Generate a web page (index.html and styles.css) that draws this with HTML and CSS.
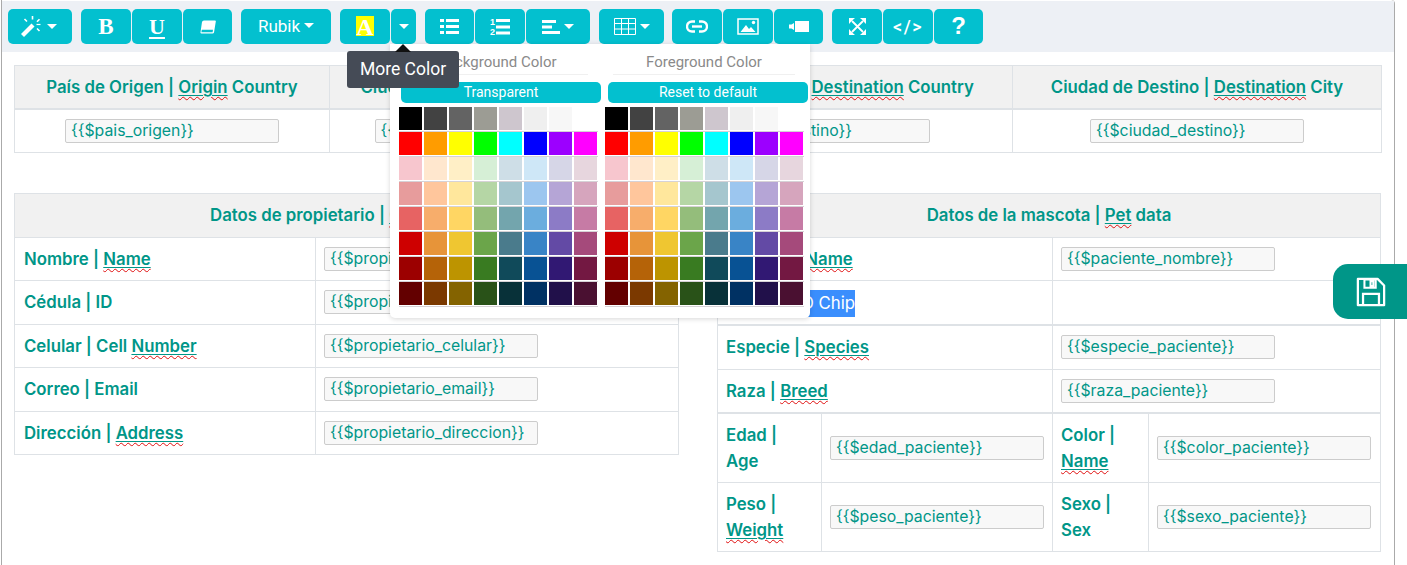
FILE: index.html
```html
<!DOCTYPE html>
<html lang="es">
<head>
<meta charset="utf-8">
<title>Plantilla</title>
<link rel="stylesheet" href="styles.css">
</head>
<body>
<div class="frame">
  <div class="toolbar">
    <div class="group">
      <button class="btn w64 wand"><svg width="24" height="21" viewBox="0 0 24 21"><path d="M0 18 10.500 7.500 13.500 10.500 3 21z" fill="#fff"/><path d="M11.500 0v3.500M3.500 3 6 5.500M18.500 3.200 16 5.700M16 12.500l2.500 2.500" stroke="#fff" stroke-width="1.600" fill="none"/><path d="M15.500 8.500h4" stroke="#fff" stroke-width="1.200"/></svg><span class="caret"></span></button>
    </div>
    <div class="group">
      <button class="btn w50"><b class="serif">B</b></button>
      <button class="btn w50"><b class="serif ul">U</b></button>
      <button class="btn w49"><svg width="16" height="14" viewBox="0 0 16 14"><path d="M4 0.500H15a.8.800 0 0 1 .8 1L14 12.500a1.500 1.500 0 0 1-1.500 1H1.500a1 1 0 0 1-1-1.200L2 2a2 2 0 0 1 2-1.500zM1.800 9.800 1.400 12.300H12.600L13 9.800z" fill="#fff" fill-rule="evenodd"/></svg></button>
    </div>
    <div class="group">
      <button class="btn w90 font">Rubik<span class="caret"></span></button>
    </div>
    <div class="group">
      <button class="btn w50"><b class="serif hilite">A</b></button>
      <button class="btn w25"><span class="caret nom"></span></button>
    </div>
    <div class="group">
      <button class="btn w49"><svg width="19" height="15" viewBox="0 0 19 15"><path d="M0 0h4v3H0zM6 0h13v3H6zM0 6h4v3H0zM6 6h13v3H6zM0 12h4v3H0zM6 12h13v3H6z" fill="#fff"/></svg></button>
      <button class="btn w50"><svg width="20" height="17" viewBox="0 0 20 17"><path d="M6 1h14v3H6zM6 7.500h14v3H6zM6 13.500h14v3H6z" fill="#fff"/><text class="num" x="0" y="7">1</text><text class="num" x="0" y="16.500">2</text></svg></button>
      <button class="btn w64"><svg width="18" height="14" viewBox="0 0 18 14"><path d="M0 0h14v3H0zM0 5.500h10v3H0zM0 11h18v3H0z" fill="#fff"/></svg><span class="caret"></span></button>
    </div>
    <div class="group tight">
      <button class="btn w65"><svg width="22" height="17" viewBox="0 0 22 17"><path d="M.5.500h21v16H.5zM.5 5.500h21M.5 11h21M7.500.500v16M14.500.500v16" fill="none" stroke="#fff"/></svg><span class="caret"></span></button>
    </div>
    <div class="group">
      <button class="btn w50"><svg width="22" height="13" viewBox="0 0 22 13"><path d="M9 1.500H6a5 5 0 0 0 0 10h3M13 1.500h3a5 5 0 0 1 0 10h-3" fill="none" stroke="#fff" stroke-width="2.400"/><path d="M6 6.500h10" stroke="#fff" stroke-width="2.400"/></svg></button>
      <button class="btn w50"><svg width="22" height="17" viewBox="0 0 22 17"><path d="M1 1h20v15H1z" fill="none" stroke="#fff" stroke-width="1.500"/><path d="M3.500 14 9 7l3 4 2-2 4.500 5z" fill="#fff"/><circle cx="16.500" cy="4.500" r="1.700" fill="#fff"/></svg></button>
      <button class="btn w49"><svg width="20" height="11" viewBox="0 0 20 11"><path d="M6 0h14v11H6zM5 2 2.500 3.500H0v4h2.500L5 9z" fill="#fff"/></svg></button>
    </div>
    <div class="group">
      <button class="btn w50"><svg width="17" height="17" viewBox="0 0 17 17"><path d="M3 3 14 14M14 3 3 14" stroke="#fff" stroke-width="1.800"/><path d="M0 0h6L4 1.800 1.800 4 0 6zM17 0v6L15 4 13 1.800 11 0zM0 17v-6L1.800 13 4 15.200 6 17zM17 17h-6L13 15.200 15.200 13 17 11z" fill="#fff"/></svg></button>
      <button class="btn w50 code">&lt;/&gt;</button>
      <button class="btn w49 help">?</button>
    </div>
  </div>

  <div class="tip-arrow"></div>
  <div class="popover">
    <div class="palette">
      <div class="pal-title">Background Color</div>
      <button class="pal-btn">Transparent</button>
      <div class="swatches">
        <div class="row"><i style="background:#000000"></i><i style="background:#424242"></i><i style="background:#636363"></i><i style="background:#9C9C94"></i><i style="background:#CEC6CE"></i><i style="background:#EFEFEF"></i><i style="background:#F7F7F7"></i><i style="background:#FFFFFF"></i></div>
        <div class="row"><i style="background:#FF0000"></i><i style="background:#FF9C00"></i><i style="background:#FFFF00"></i><i style="background:#00FF00"></i><i style="background:#00FFFF"></i><i style="background:#0000FF"></i><i style="background:#9C00FF"></i><i style="background:#FF00FF"></i></div>
        <div class="row"><i style="background:#F7C6CE"></i><i style="background:#FFE7CE"></i><i style="background:#FFEFC6"></i><i style="background:#D6EFD6"></i><i style="background:#CEDEE7"></i><i style="background:#CEE7F7"></i><i style="background:#D6D6E7"></i><i style="background:#E7D6DE"></i></div>
        <div class="row"><i style="background:#E79C9C"></i><i style="background:#FFC69C"></i><i style="background:#FFE79C"></i><i style="background:#B5D6A5"></i><i style="background:#A5C6CE"></i><i style="background:#9CC6EF"></i><i style="background:#B5A5D6"></i><i style="background:#D6A5BD"></i></div>
        <div class="row"><i style="background:#E76363"></i><i style="background:#F7AD6B"></i><i style="background:#FFD663"></i><i style="background:#94BD7B"></i><i style="background:#73A5AD"></i><i style="background:#6BADDE"></i><i style="background:#8C7BC6"></i><i style="background:#C67BA5"></i></div>
        <div class="row"><i style="background:#CE0000"></i><i style="background:#E79439"></i><i style="background:#EFC631"></i><i style="background:#6BA54A"></i><i style="background:#4A7B8C"></i><i style="background:#3984C6"></i><i style="background:#634AA5"></i><i style="background:#A54A7B"></i></div>
        <div class="row"><i style="background:#9C0000"></i><i style="background:#B56308"></i><i style="background:#BD9400"></i><i style="background:#397B21"></i><i style="background:#104A5A"></i><i style="background:#085294"></i><i style="background:#311873"></i><i style="background:#731842"></i></div>
        <div class="row"><i style="background:#630000"></i><i style="background:#7B3900"></i><i style="background:#846300"></i><i style="background:#295218"></i><i style="background:#083139"></i><i style="background:#003163"></i><i style="background:#21104A"></i><i style="background:#4A1031"></i></div>
      </div>
    </div>
    <div class="palette fore">
      <div class="pal-title">Foreground Color</div>
      <button class="pal-btn">Reset to default</button>
      <div class="swatches">
        <div class="row"><i style="background:#000000"></i><i style="background:#424242"></i><i style="background:#636363"></i><i style="background:#9C9C94"></i><i style="background:#CEC6CE"></i><i style="background:#EFEFEF"></i><i style="background:#F7F7F7"></i><i style="background:#FFFFFF"></i></div>
        <div class="row"><i style="background:#FF0000"></i><i style="background:#FF9C00"></i><i style="background:#FFFF00"></i><i style="background:#00FF00"></i><i style="background:#00FFFF"></i><i style="background:#0000FF"></i><i style="background:#9C00FF"></i><i style="background:#FF00FF"></i></div>
        <div class="row"><i style="background:#F7C6CE"></i><i style="background:#FFE7CE"></i><i style="background:#FFEFC6"></i><i style="background:#D6EFD6"></i><i style="background:#CEDEE7"></i><i style="background:#CEE7F7"></i><i style="background:#D6D6E7"></i><i style="background:#E7D6DE"></i></div>
        <div class="row"><i style="background:#E79C9C"></i><i style="background:#FFC69C"></i><i style="background:#FFE79C"></i><i style="background:#B5D6A5"></i><i style="background:#A5C6CE"></i><i style="background:#9CC6EF"></i><i style="background:#B5A5D6"></i><i style="background:#D6A5BD"></i></div>
        <div class="row"><i style="background:#E76363"></i><i style="background:#F7AD6B"></i><i style="background:#FFD663"></i><i style="background:#94BD7B"></i><i style="background:#73A5AD"></i><i style="background:#6BADDE"></i><i style="background:#8C7BC6"></i><i style="background:#C67BA5"></i></div>
        <div class="row"><i style="background:#CE0000"></i><i style="background:#E79439"></i><i style="background:#EFC631"></i><i style="background:#6BA54A"></i><i style="background:#4A7B8C"></i><i style="background:#3984C6"></i><i style="background:#634AA5"></i><i style="background:#A54A7B"></i></div>
        <div class="row"><i style="background:#9C0000"></i><i style="background:#B56308"></i><i style="background:#BD9400"></i><i style="background:#397B21"></i><i style="background:#104A5A"></i><i style="background:#085294"></i><i style="background:#311873"></i><i style="background:#731842"></i></div>
        <div class="row"><i style="background:#630000"></i><i style="background:#7B3900"></i><i style="background:#846300"></i><i style="background:#295218"></i><i style="background:#083139"></i><i style="background:#003163"></i><i style="background:#21104A"></i><i style="background:#4A1031"></i></div>
      </div>
    </div>
  </div>
  <div class="tooltip">More Color</div>

  <div class="content">
    <table class="grid top">
      <colgroup><col class="c315"><col class="c304"><col class="c379"><col class="c369"></colgroup>
      <thead>
        <tr>
          <th>País de Origen | <u><span class="sp">Origin</span></u> Country</th>
          <th>Ciudad de Origen | <u><span class="sp">Origin</span></u> City</th>
          <th>País de Destino | <u><span class="sp">Destination</span></u> Country</th>
          <th>Ciudad de Destino | <u><span class="sp">Destination</span></u> City</th>
        </tr>
      </thead>
      <tbody>
        <tr>
          <td class="center"><span class="field">{{$pais_origen}}</span></td>
          <td class="center"><span class="field">{{$ciudad_origen}}</span></td>
          <td class="center"><span class="field">{{$pais_destino}}</span></td>
          <td class="center"><span class="field">{{$ciudad_destino}}</span></td>
        </tr>
      </tbody>
    </table>

    <div class="columns">
      <div class="col-left">
        <table class="grid">
          <colgroup><col class="c301"><col></colgroup>
          <tr><th colspan="2">Datos de propietario | <u><span class="sp">Owner</span></u> data</th></tr>
          <tr><td class="lbl">Nombre | <u><span class="sp">Name</span></u></td><td><span class="field">{{$propietario_nombre}}</span></td></tr>
          <tr><td class="lbl">Cédula | ID</td><td><span class="field">{{$propietario_cedula}}</span></td></tr>
          <tr><td class="lbl">Celular | Cell <u><span class="sp">Number</span></u></td><td><span class="field">{{$propietario_celular}}</span></td></tr>
          <tr><td class="lbl">Correo | Email</td><td><span class="field">{{$propietario_email}}</span></td></tr>
          <tr><td class="lbl">Dirección | <u><span class="sp">Address</span></u></td><td><span class="field">{{$propietario_direccion}}</span></td></tr>
        </table>
      </div>
      <div class="col-right">
        <table class="grid">
          <colgroup><col class="c335"><col></colgroup>
          <tr><th colspan="2">Datos de la mascota | <u><span class="sp">Pet</span></u> data</th></tr>
          <tr><td class="lbl">Nombre | <u><span class="sp">Name</span></u></td><td><span class="field">{{$paciente_nombre}}</span></td></tr>
          <tr><td class="lbl chip-cell"><span class="selected">ID Chip</span></td><td></td></tr>
        </table>
        <table class="grid">
          <colgroup><col class="c335"><col></colgroup>
          <tr><td class="lbl">Especie | <u><span class="sp">Species</span></u></td><td><span class="field">{{$especie_paciente}}</span></td></tr>
          <tr><td class="lbl">Raza | <u><span class="sp">Breed</span></u></td><td><span class="field">{{$raza_paciente}}</span></td></tr>
        </table>
        <table class="grid tall">
          <colgroup><col class="c104"><col class="c231"><col class="c96"><col></colgroup>
          <tr>
            <td class="lbl">Edad |<br>Age</td><td><span class="field">{{$edad_paciente}}</span></td>
            <td class="lbl">Color |<br><u><span class="sp">Name</span></u></td><td><span class="field">{{$color_paciente}}</span></td>
          </tr>
          <tr>
            <td class="lbl">Peso |<br><u><span class="sp">Weight</span></u></td><td><span class="field">{{$peso_paciente}}</span></td>
            <td class="lbl">Sexo |<br>Sex</td><td><span class="field">{{$sexo_paciente}}</span></td>
          </tr>
        </table>
      </div>
    </div>
  </div>

  <button class="save"><svg width="30" height="30" viewBox="0 0 32 32"><path d="M2 2h21l7 7v21H2z" fill="none" stroke="#fff" stroke-width="2.400" stroke-linejoin="round"/><path d="M9 2.500h12v9H9zM15.500 4.500h3v5h-3z" fill="none" stroke="#fff" stroke-width="2.200"/><path d="M7.500 29v-11h17v11" fill="none" stroke="#fff" stroke-width="2.400"/></svg></button>
</div>
</body>
</html>
```

FILE: styles.css
```css
* { box-sizing: border-box; }
html, body { margin: 0; padding: 0; height: 100%; overflow: hidden; background: #fff; }
body { font-family: "Inter", "Roboto", "Liberation Sans", sans-serif; color: #009688; }

.frame {
  position: relative;
  margin: 0 0 0 1px;
  padding-top: 1px;
  width: 1394px;
  height: 565px;
  border: 1px solid #aaa;
  border-width: 0 1px 0 1px;
  border-top-right-radius: 4px;
}

.toolbar {
  display: flex;
  gap: 9px;
  height: 51px;
  padding: 8px 6px 0;
  background: #edf0f5;
}
.group { display: flex; gap: 1px; }
.tight { margin-right: -1px; }
.btn {
  display: flex;
  align-items: center;
  justify-content: center;
  gap: 3px;
  height: 35px;
  padding: 0;
  border: 0;
  border-radius: 5px;
  background: #03c0cf;
  color: #fff;
  font-family: "Roboto", sans-serif;
}
.w25 { width: 25px; }
.w49 { width: 49px; }
.w50 { width: 50px; }
.w64 { width: 64px; }
.w65 { width: 65px; }
.w90 { width: 90px; }
.wand { padding-right: 2px; gap: 1px; }
.caret {
  width: 0; height: 0;
  border-left: 5px solid transparent;
  border-right: 5px solid transparent;
  border-top: 5px solid #fff;
  margin-left: 1px;
}
.font { font-size: 17px; gap: 3px; padding-bottom: 2px; }
.serif { font-family: "Liberation Serif", serif; font-size: 23px; line-height: 1; }
.ul { text-decoration: underline; text-decoration-thickness: 2px; text-underline-offset: 3px; font-size: 22px; }
.hilite { background: #ff0; color: #fff; width: 18px; height: 20px; line-height: 22px; display: block; font-size: 24px; margin-bottom: 1px; }
.code { font-size: 18px; font-weight: 500; letter-spacing: 1.500px; }
.help { font-size: 24px; font-weight: 700; padding-bottom: 1px; font-family: "Liberation Sans", sans-serif; }
.num { fill: #fff; font-size: 9px; font-weight: 700; font-family: "Liberation Sans", sans-serif; }

.tip-arrow {
  position: absolute;
  left: 393px; top: 44px;
  width: 0; height: 0;
  border-left: 8px solid transparent;
  border-right: 8px solid transparent;
  border-bottom: 8px solid #111;
  z-index: 6;
}
.tooltip {
  position: absolute;
  left: 345px; top: 51px;
  width: 112px; height: 37px;
  border-radius: 3px;
  background: #454b56;
  color: #fff;
  font-family: "Roboto", sans-serif;
  font-size: 17.500px;
  line-height: 36px;
  text-align: center;
  z-index: 5;
}
.popover {
  position: absolute;
  left: 388px; top: 44px;
  width: 420px; height: 274px;
  display: flex;
  gap: 7px;
  padding: 0 2px 0 11px;
  background: #fff;
  border-radius: 0 0 5px 5px;
  box-shadow: 0 1px 5px rgba(0,0,0,.16);
  z-index: 4;
}
.palette { width: 200px; display: flex; flex-direction: column; }
.pal-title {
  height: 31px;
  margin: 0 13px 7px 5px;
  padding-top: 9px;
  font-family: "Roboto", sans-serif;
  font-size: 15px;
  line-height: 19px;
  color: #8a8a8a;
  text-align: center;
  border-bottom: 1px solid #f0f0f0;
}
.pal-btn {
  width: 200px; height: 21px;
  padding: 0 0 2px;
  border: 0;
  border-radius: 5px;
  background: #03c0cf;
  color: #fff;
  font-family: "Roboto", sans-serif;
  font-size: 14px;
}
.swatches { margin: 4px 0 0 -2px; }
.fore .swatches { margin-left: -3px; }
.row {
  display: flex;
  gap: 2px;
  height: 25px;
  width: 199px;
  border-bottom: 1px solid #d6d2d6;
  padding-bottom: 1px;
}
.row i { display: block; width: 23px; height: 23px; }

.content { padding: 13px 13px 0 12px; }
.grid {
  width: 100%;
  table-layout: fixed;
  border-collapse: collapse;
  border: 1px solid #dee2e6;
}
.grid th, .grid td {
  border: 1px solid #dee2e6;
  padding: 8px;
  line-height: 26.500px;
  vertical-align: middle;
}
.grid th {
  background: #f1f1f1;
  font-size: 16.800px;
  font-weight: 600;
  text-align: center;
}
.top thead th { border-bottom-width: 2px; padding-bottom: 7px; }
.top td { height: 44px; }
.center .field { margin: 0 auto; }
.lbl { font-size: 16.800px; font-weight: 600; }
.grid td.lbl { padding-left: 9px; }
.col-right .grid td.lbl { padding-left: 8px; }
.tall td { height: 69px; }
.grid.tall td { line-height: 26px; }
.c315 { width: 315px; }
.c304 { width: 304px; }
.c379 { width: 379px; }
.c369 { width: 369px; }
.c301 { width: 301px; }
.c335 { width: 335px; }
.c104 { width: 104px; }
.c231 { width: 231px; }
.c96 { width: 96px; }

.field {
  display: block;
  width: 214px;
  height: 24px;
  padding: 0 5px;
  border: 1px solid #ccc;
  border-radius: 2px;
  background: #f8f8f8;
  color: #009688;
  font-size: 15.800px;
  line-height: 22px;
  text-align: left;
}
u { text-decoration: underline; text-decoration-thickness: 1px; text-underline-offset: 2px; }
.sp { text-decoration: underline wavy #e01010; text-decoration-thickness: 1px; text-underline-offset: 3px; }

.columns { display: flex; gap: 38px; margin-top: 40px; align-items: flex-start; }
.col-left { width: 665px; }
.col-right { width: 664px; }
.grid td.chip-cell { padding-top: 9px; padding-bottom: 7px; }
.selected {
  display: block;
  background: #3a8efd;
  color: #fff;
  font-weight: 400;
  white-space: nowrap;
  text-align: right;
  width: 129px;
  height: 27px;
}

.save {
  position: absolute;
  right: -13px; top: 264px;
  width: 74px; height: 55px;
  padding: 0 0 0 2px;
  border: 0;
  border-radius: 15px 0 0 15px;
  background: #009688;
  display: flex;
  align-items: center;
  justify-content: center;
  z-index: 7;
}
```
